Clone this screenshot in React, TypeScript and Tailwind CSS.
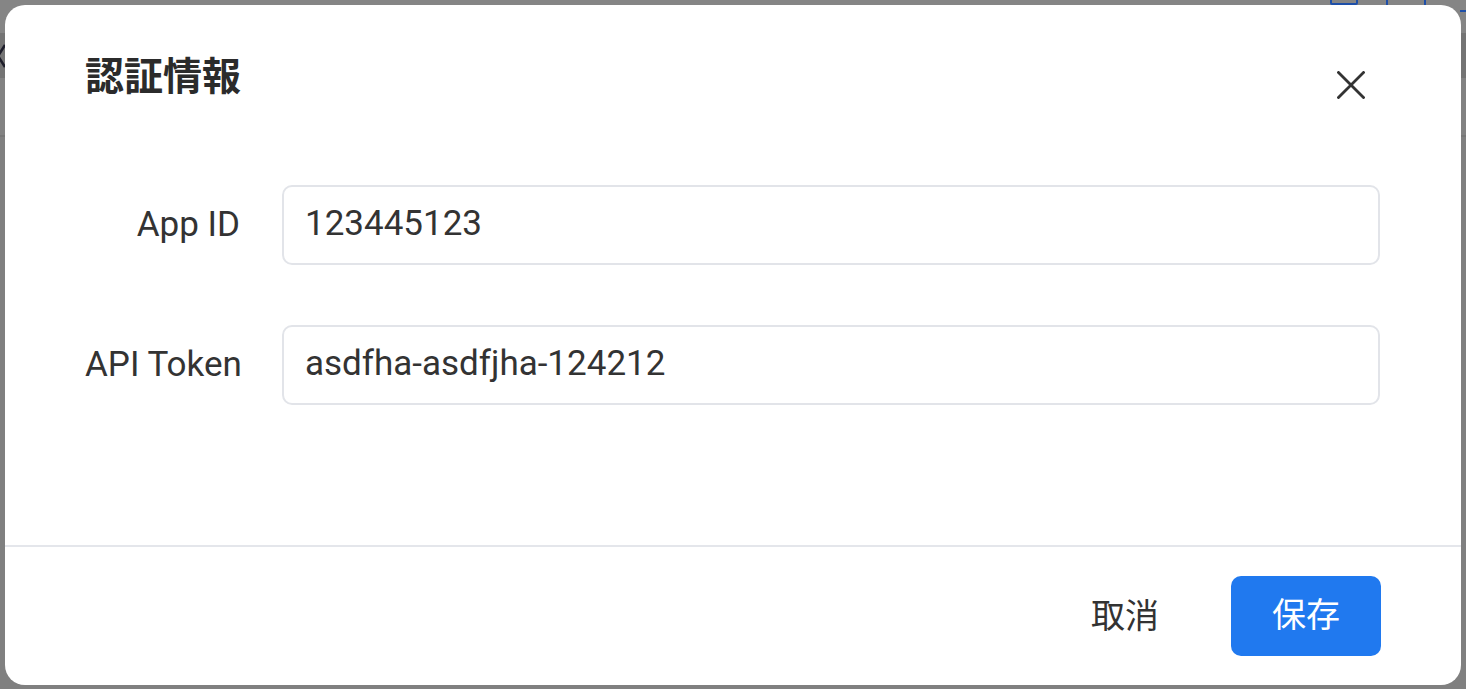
import React from "react";

const FONT = '"Roboto", "Noto Sans CJK JP", "Noto Sans", sans-serif';

function CloseIcon() {
  return (
    <svg width="28" height="28" viewBox="0 0 28 28" fill="none">
      <path d="M1.5 1.5 L26.5 26.5 M26.5 1.5 L1.5 26.5" stroke="#333333" strokeWidth="2.8" strokeLinecap="square" />
    </svg>
  );
}

function Field({ label, value }: { label: string; value: string }) {
  return (
    <div className="flex items-center">
      <div className="w-[155px] text-right text-[35px] text-[#333333] leading-none shrink-0 whitespace-nowrap">{label}</div>
      <div className="ml-[42px] flex-1 h-[80px] rounded-[10px] border-2 border-[#e2e4e9] flex items-center pl-[21px] text-[35px] text-[#333333] whitespace-nowrap">
        {value}
      </div>
    </div>
  );
}

export default function App() {
  return (
    <div
      className="relative w-[1466px] h-[689px] bg-[#808080] overflow-hidden flex items-center justify-center"
      style={{ fontFamily: FONT }}
    >
      {/* dimmed page behind the dialog */}
      <div className="absolute inset-0">
        <div className="h-[33px] bg-[#858585]" />
        <div className="h-[45px] bg-[#747474] flex items-center">
          <svg width="10" height="30" viewBox="0 0 10 30" className="-ml-[4px]">
            <path d="M9 4 L2 15 L9 26" stroke="#1d1d2a" strokeWidth="2.5" fill="none" />
          </svg>
        </div>
        <div className="h-[59px] bg-[#828282] border-b-2 border-[#777777]" />
        <div className="absolute left-[1330px] -top-[20px] w-[28px] h-[25px] border-2 border-[#1e4fa8] rounded-[2px]" />
        <div className="absolute left-[1386px] -top-[20px] w-[40px] h-[27px] border-x-2 border-[#1e4fa8]" />
        <div className="absolute left-[1460px] top-[10px] w-[10px] h-[2px] bg-[#1e4fa8]" />
      </div>

      {/* dialog */}
      <div className="relative w-[1456px] h-[680px] bg-white rounded-[20px] flex flex-col">
        <div className="flex justify-between items-start pl-[80px] pr-[96px] pt-[46px]">
          <div className="text-[39px] font-bold text-[#2b2b2b] leading-[52px]">認証情報</div>
          <button className="mt-[20px] w-[28px] h-[28px] flex items-center justify-center">
            <CloseIcon />
          </button>
        </div>

        <div className="flex flex-col gap-[60px] pl-[80px] pr-[81px] pt-[82px]">
          <Field label="App ID" value="123445123" />
          <Field label="API Token" value="asdfha-asdfjha-124212" />
        </div>

        <div className="mt-auto border-t-2 border-[#e4e6eb] flex items-center justify-end pr-[80px] h-[140px]">
          <button className="text-[34px] text-[#333333] mr-[72px] leading-none">取消</button>
          <button className="w-[150px] h-[80px] rounded-[10px] bg-[#2079ef] text-white text-[34px] flex items-center justify-center">
            保存
          </button>
        </div>
      </div>
    </div>
  );
}
